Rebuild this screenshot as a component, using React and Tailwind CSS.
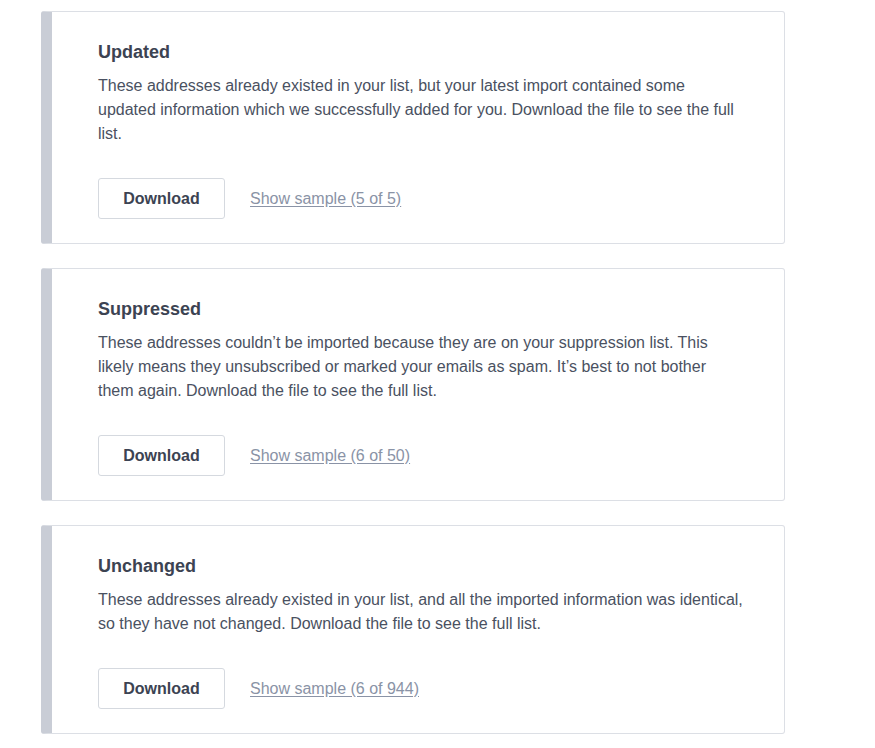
const SECTIONS = [
  {
    title: 'Updated',
    text: 'These addresses already existed in your list, but your latest import contained some updated information which we successfully added for you. Download the file to see the full list.',
    sample: 'Show sample (5 of 5)',
  },
  {
    title: 'Suppressed',
    text: 'These addresses couldn’t be imported because they are on your suppression list. This likely means they unsubscribed or marked your emails as spam. It’s best to not bother them again. Download the file to see the full list.',
    sample: 'Show sample (6 of 50)',
  },
  {
    title: 'Unchanged',
    text: 'These addresses already existed in your list, and all the imported information was identical, so they have not changed. Download the file to see the full list.',
    sample: 'Show sample (6 of 944)',
  },
];

export default function App() {
  return (
    <div className="min-h-screen bg-white pl-[41px] pt-[11px] font-['Liberation_Sans',Arial,sans-serif]">
      <div className="flex w-[744px] flex-col gap-[24px]">
        {SECTIONS.map(s => (
          <div
            key={s.title}
            className="rounded-[3px] border border-[#dcdfe5] border-l-[11px] border-l-[#c9cdd6] bg-white pb-[24px] pl-[46px] pr-[40px] pt-[28px]"
          >
            <h3 className="text-[18px] font-bold leading-[24px] text-[#3c4352]">{s.title}</h3>
            <p className="mt-[10px] text-[16px] leading-[24px] text-[#4a5161]">{s.text}</p>
            <div className="mt-[32px] flex items-center gap-[25px]">
              <button className="h-[41px] w-[127px] rounded-[3px] border border-[#d5d9df] bg-white text-[16px] font-bold text-[#3c4352]">
                Download
              </button>
              <a href="#" className="text-[16px] text-[#8a93a6] underline underline-offset-2">
                {s.sample}
              </a>
            </div>
          </div>
        ))}
      </div>
    </div>
  );
}
